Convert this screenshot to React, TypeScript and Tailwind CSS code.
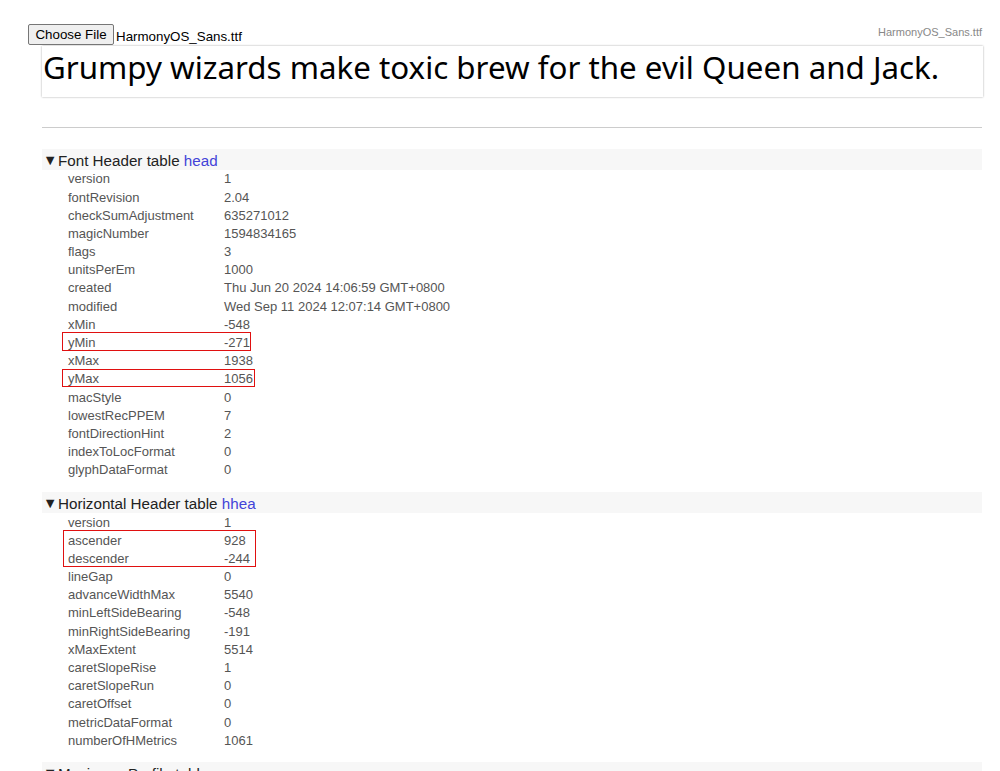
import React from "react";

type Row = [string, string];

const head: Row[] = [
  ["version", "1"],
  ["fontRevision", "2.04"],
  ["checkSumAdjustment", "635271012"],
  ["magicNumber", "1594834165"],
  ["flags", "3"],
  ["unitsPerEm", "1000"],
  ["created", "Thu Jun 20 2024 14:06:59 GMT+0800"],
  ["modified", "Wed Sep 11 2024 12:07:14 GMT+0800"],
  ["xMin", "-548"],
  ["yMin", "-271"],
  ["xMax", "1938"],
  ["yMax", "1056"],
  ["macStyle", "0"],
  ["lowestRecPPEM", "7"],
  ["fontDirectionHint", "2"],
  ["indexToLocFormat", "0"],
  ["glyphDataFormat", "0"],
];

const hhea: Row[] = [
  ["version", "1"],
  ["ascender", "928"],
  ["descender", "-244"],
  ["lineGap", "0"],
  ["advanceWidthMax", "5540"],
  ["minLeftSideBearing", "-548"],
  ["minRightSideBearing", "-191"],
  ["xMaxExtent", "5514"],
  ["caretSlopeRise", "1"],
  ["caretSlopeRun", "0"],
  ["caretOffset", "0"],
  ["metricDataFormat", "0"],
  ["numberOfHMetrics", "1061"],
];

type Box = { row: number; rows: number; left: number; width: number };

function Section({
  title,
  tag,
  rows,
  boxes,
}: {
  title: string;
  tag: string;
  rows: Row[];
  boxes: Box[];
}) {
  return (
    <div>
      <div className="h-[21px] bg-[#f7f7f7] flex items-center text-[15.2px] text-[#222] leading-none">
        <span className="ml-[1px] w-[15px] text-[14.5px] translate-y-[1px]">▼</span>
        <span className="translate-y-[1px]">
          {title} <span className="text-[#4343d8]">{tag}</span>
        </span>
      </div>
      <div className="relative pl-[26px]">
        {rows.map(([k, v]) => (
          <div key={k} className="flex h-[18.2px] items-center text-[13px] text-[#555]">
            <span className="w-[156px]">{k}</span>
            <span>{v}</span>
          </div>
        ))}
        {boxes.map((b, i) => (
          <div
            key={i}
            className="absolute border border-[#e01010] pointer-events-none"
            style={{
              top: b.row * 18.2 - 1.5,
              height: b.rows * 18.2 + 0.5,
              left: b.left,
              width: b.width,
            }}
          />
        ))}
      </div>
    </div>
  );
}

export default function App() {
  return (
    <div className="relative min-h-screen bg-white font-['Liberation_Sans',Arial,sans-serif] pl-[42px] pr-[17px] pt-[24px] overflow-hidden">
      <div className="absolute right-[18px] top-[24px] text-[11px] text-[#888]">HarmonyOS_Sans.ttf</div>
      <div className="flex items-center ml-[-14px] h-[21px]">
        <button className="h-[21px] w-[86px] border border-[#767676] rounded-[2px] bg-[#efefef] text-[13.33px] text-black leading-none">
          Choose File
        </button>
        <span className="ml-[2px] text-[13.33px] text-black translate-y-[2px]">HarmonyOS_Sans.ttf</span>
      </div>
      <div className="mt-[1px] h-[51px] w-[941px] bg-white shadow-[0_0_2px_rgba(0,0,0,0.35)] flex items-center pl-[1px] pb-[7px]">
        <span className="font-['Noto_Sans',sans-serif] text-[31.3px] text-black leading-none">
          Grumpy wizards make toxic brew for the evil Queen and Jack.
        </span>
      </div>
      <div className="mt-[30px] border-t border-[#ccc] w-[940px]" />
      <div className="mt-[21px] w-[940px]">
        <Section
          title="Font Header table"
          tag="head"
          rows={head}
          boxes={[
            { row: 9, rows: 1, left: 20, width: 189 },
            { row: 11, rows: 1, left: 20, width: 193 },
          ]}
        />
        <div className="h-[13px]" />
        <Section
          title="Horizontal Header table"
          tag="hhea"
          rows={hhea}
          boxes={[{ row: 1, rows: 2, left: 21, width: 193 }]}
        />
        <div className="h-[12px]" />
        <Section title="Maximum Profile table" tag="maxp" rows={[["version", "0.3125"]]} boxes={[]} />
      </div>
    </div>
  );
}
